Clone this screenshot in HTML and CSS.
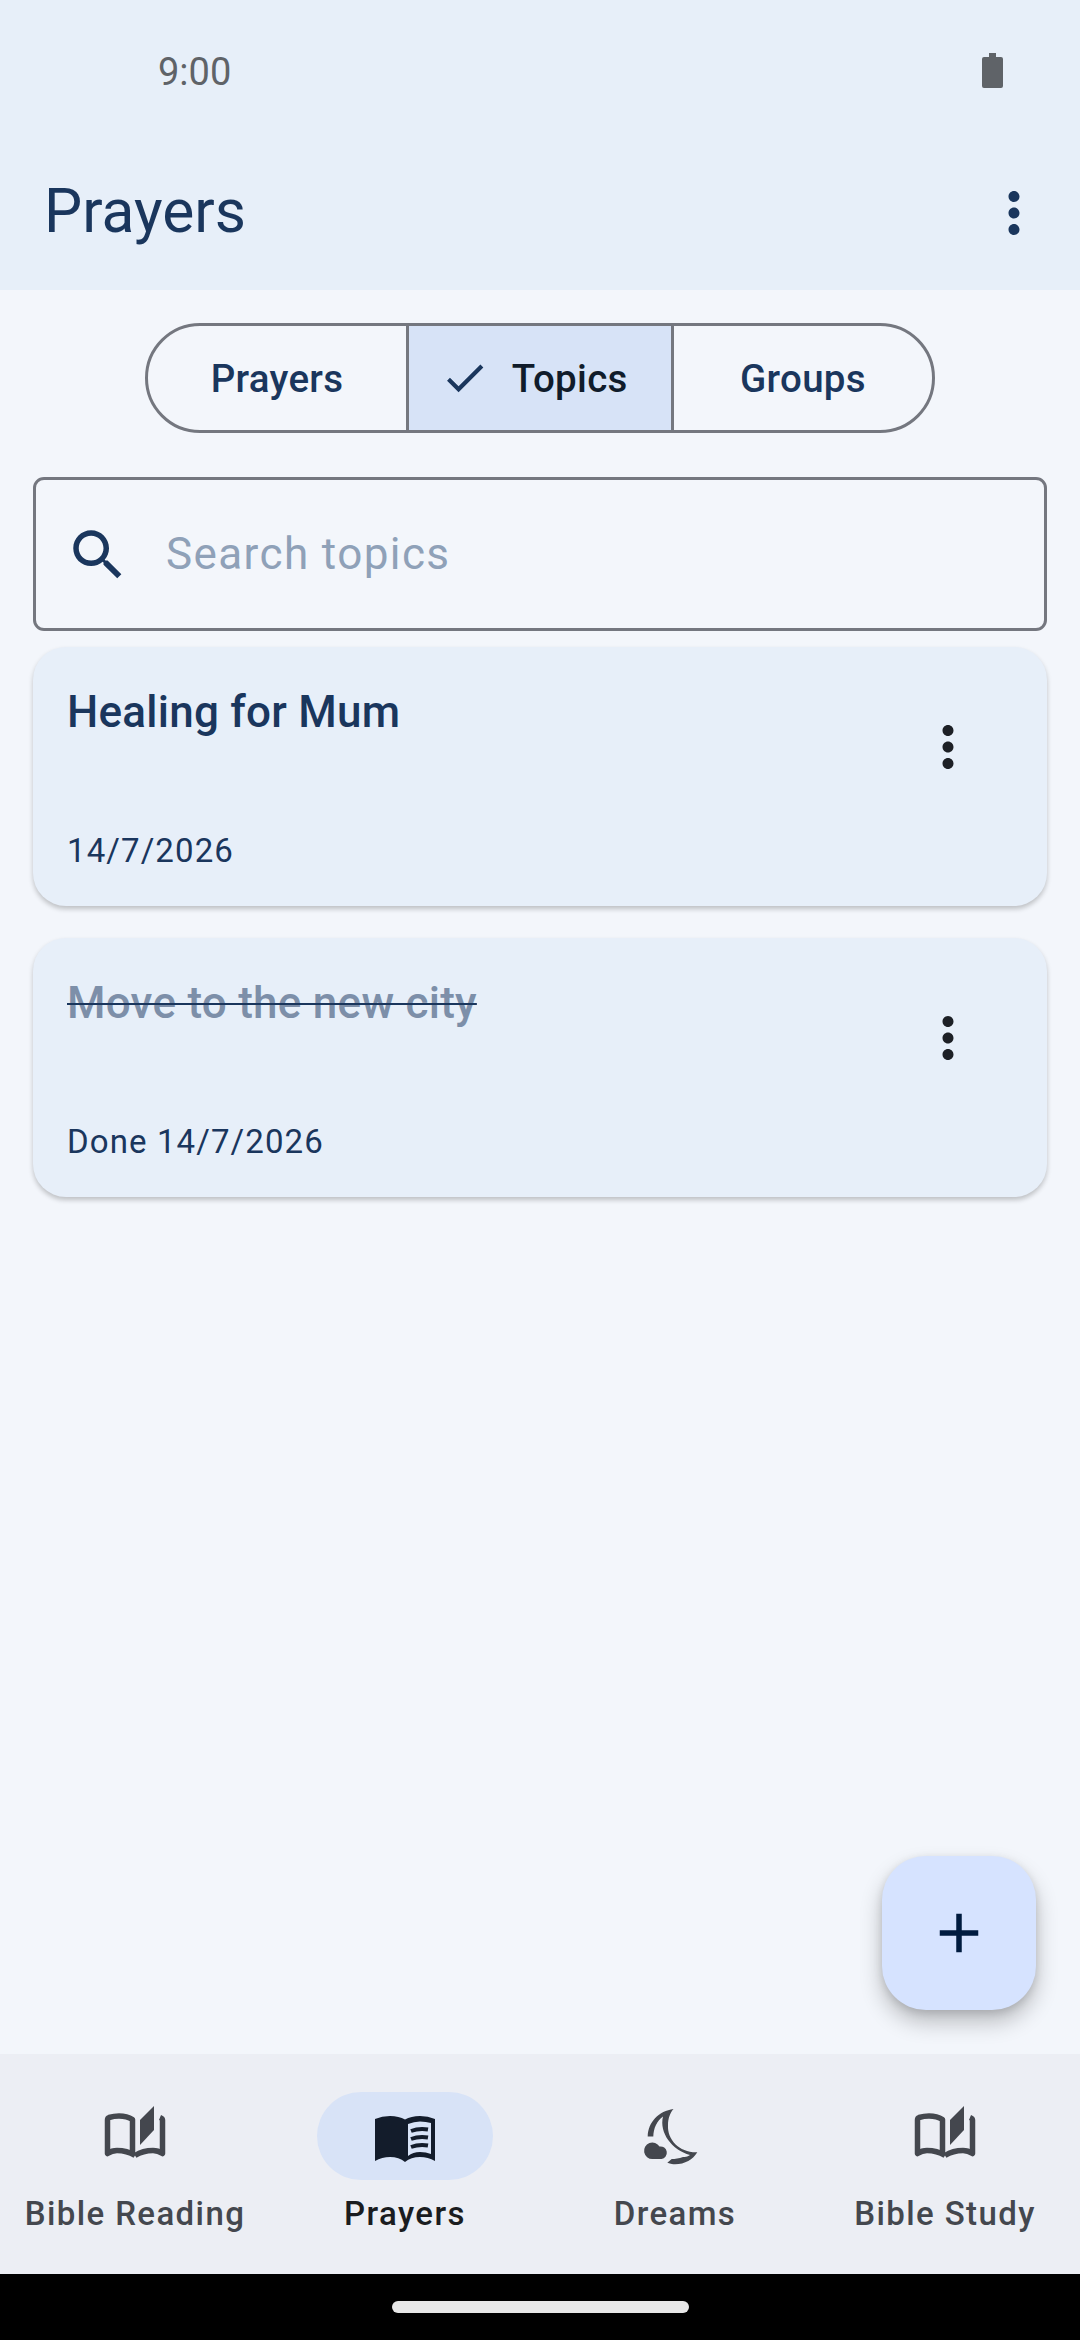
FILE: index.html
```html
<!DOCTYPE html>
<html lang="en">
<head>
    <meta charset="UTF-8">
    <meta name="viewport" content="width=device-width, initial-scale=1.0">
    <title>Prayers</title>
    <link rel="stylesheet" href="styles.css">
</head>
<body>
    <div class="phone">
        <header class="top">
            <div class="status">
                <span class="time">9:00</span>
                <svg class="battery" viewBox="0 0 21 35"><path d="M7 0h7v4h5q2 0 2 2v27q0 2-2 2H2q-2 0-2-2V6q0-2 2-2h5z"/></svg>
            </div>
            <div class="appbar">
                <h1>Prayers</h1>
                <svg class="icon dots-top" viewBox="0 0 24 24"><path d="M12 8c1.1 0 2-.9 2-2s-.9-2-2-2-2 .9-2 2 .9 2 2 2zm0 2c-1.1 0-2 .9-2 2s.9 2 2 2 2-.9 2-2-.9-2-2-2zm0 6c-1.1 0-2 .9-2 2s.9 2 2 2 2-.9 2-2-.9-2-2-2z"/></svg>
            </div>
        </header>

        <main class="content">
            <div class="segments">
                <div class="segment">Prayers</div>
                <div class="segment selected">
                    <svg class="check" viewBox="0 0 24 24"><path d="M9 16.17L4.83 12l-1.42 1.41L9 19 21 7l-1.41-1.41z"/></svg>
                    Topics
                </div>
                <div class="segment">Groups</div>
            </div>

            <div class="search">
                <svg class="icon search-icon" viewBox="0 0 24 24"><path d="M15.5 14h-.79l-.28-.27C15.41 12.59 16 11.11 16 9.5 16 5.91 13.09 3 9.5 3S3 5.91 3 9.5 5.91 16 9.5 16c1.61 0 3.09-.59 4.23-1.57l.27.28v.79l5 4.99L20.49 19l-4.99-5zm-6 0C7.01 14 5 11.99 5 9.5S7.01 5 9.5 5 14 7.01 14 9.5 11.99 14 9.5 14z"/></svg>
                <span class="placeholder">Search topics</span>
            </div>

            <div class="card">
                <div class="card-text">
                    <div class="card-title">Healing for Mum</div>
                    <div class="card-date">14/7/2026</div>
                </div>
                <svg class="icon dots-card" viewBox="0 0 24 24"><path d="M12 8c1.1 0 2-.9 2-2s-.9-2-2-2-2 .9-2 2 .9 2 2 2zm0 2c-1.1 0-2 .9-2 2s.9 2 2 2 2-.9 2-2-.9-2-2-2zm0 6c-1.1 0-2 .9-2 2s.9 2 2 2 2-.9 2-2-.9-2-2-2z"/></svg>
            </div>

            <div class="card">
                <div class="card-text">
                    <div class="card-title done">Move to the new city</div>
                    <div class="card-date">Done 14/7/2026</div>
                </div>
                <svg class="icon dots-card" viewBox="0 0 24 24"><path d="M12 8c1.1 0 2-.9 2-2s-.9-2-2-2-2 .9-2 2 .9 2 2 2zm0 2c-1.1 0-2 .9-2 2s.9 2 2 2 2-.9 2-2-.9-2-2-2zm0 6c-1.1 0-2 .9-2 2s.9 2 2 2 2-.9 2-2-.9-2-2-2z"/></svg>
            </div>

            <div class="fab">
                <svg class="icon" viewBox="0 0 24 24"><path d="M19 13h-6v6h-2v-6H5v-2h6V5h2v6h6v2z"/></svg>
            </div>
        </main>

        <nav class="bottom-nav">
            <div class="nav-item">
                <div class="nav-icon">
                    <svg class="nav-svg" viewBox="0 0 66 66">
                        <path class="book-line" d="M33 52.5Q25 47.5 15 47.5Q10 47.5 5.5 50.5V17Q5.5 15 7 14.5Q12 13 17 13Q25 13 30.5 16.5V50"/>
                        <path class="book-line" d="M33 52.5Q41 47.5 51 47.5Q56 47.5 60.5 50.5V17Q60.5 15.5 58 14.5"/>
                        <path d="M38 17L52 3V27L38 42z"/>
                    </svg>
                </div>
                <span class="nav-label">Bible Reading</span>
            </div>
            <div class="nav-item active">
                <div class="nav-icon">
                    <svg class="nav-svg" viewBox="0 0 66 66">
                        <path d="M3 16Q10 13 18 13Q27 13 33 16.5Q39 13 48 13Q56 13 63 16V58Q56 54 48 54Q39 54 33 59Q27 54 18 54Q10 54 3 58z"/>
                        <path class="page" d="M36 21Q42 18.5 48 18.5Q54 18.5 59 20V51Q54 49 48 49Q41 49 36 53z"/>
                        <path class="page-line" d="M39 28Q47 25 56 26.5M39 36Q47 33 56 34.5M39 44Q47 41 56 42.5"/>
                    </svg>
                </div>
                <span class="nav-label">Prayers</span>
            </div>
            <div class="nav-item">
                <div class="nav-icon">
                    <svg class="nav-svg" viewBox="0 0 66 66">
                        <path d="M31.5 6C17 8 6 19 5.7 33.5L11.3 33.5C11.5 25 15 18 21 13.5C17 30 30 47 48 52C45 54 43 54 41 54C37 55.5 33 56 29.7 56L25.3 59.7C29 61 31 61.3 33 61.3C43 61.3 51 56.5 55.3 49.3C38 50 25 37 26 22C26 16 28 10 31.5 6z"/>
                        <path d="M10.5 56a8.3 8.3 0 1 1 7-12.5a6.3 6.3 0 0 1 2 12.5z"/>
                    </svg>
                </div>
                <span class="nav-label">Dreams</span>
            </div>
            <div class="nav-item">
                <div class="nav-icon">
                    <svg class="nav-svg" viewBox="0 0 66 66">
                        <path class="book-line" d="M33 52.5Q25 47.5 15 47.5Q10 47.5 5.5 50.5V17Q5.5 15 7 14.5Q12 13 17 13Q25 13 30.5 16.5V50"/>
                        <path class="book-line" d="M33 52.5Q41 47.5 51 47.5Q56 47.5 60.5 50.5V17Q60.5 15.5 58 14.5"/>
                        <path d="M38 17L52 3V27L38 42z"/>
                    </svg>
                </div>
                <span class="nav-label">Bible Study</span>
            </div>
        </nav>

        <div class="gesture-bar"><div class="gesture-pill"></div></div>
    </div>
</body>
</html>
```

FILE: styles.css
```css
* {
    box-sizing: border-box;
}
body {
    margin: 0;
    font-family: Roboto, "Liberation Sans", sans-serif;
    background: #f3f6fb;
    color: #1a365d;
}
.phone {
    width: 1080px;
    height: 2340px;
    display: flex;
    flex-direction: column;
    overflow: hidden;
}
.icon {
    width: 66px;
    height: 66px;
    flex-shrink: 0;
    fill: currentColor;
}

/* top bars */
.top {
    background: #e7eff9;
    height: 290px;
}
.status {
    height: 136px;
    padding: 50px 77px 0 158px;
    display: flex;
    justify-content: space-between;
    align-items: flex-start;
}
.time {
    font-size: 38px;
    line-height: 44px;
    color: #5f6368;
}
.battery {
    width: 21px;
    height: 35px;
    margin-top: 3px;
    fill: #5f6368;
}
.appbar {
    height: 154px;
    padding: 0 33px 4px 44px;
    display: flex;
    justify-content: space-between;
    align-items: center;
}
.appbar h1 {
    margin: 0;
    font-size: 60.5px;
    font-weight: 400;
}
.dots-top {
    margin-top: 4px;
}

/* main area */
.content {
    flex: 1;
    position: relative;
    padding: 33px 33px 0;
}
.segments {
    width: 790px;
    height: 110px;
    margin: 0 auto 44px;
    display: flex;
    border: 3px solid #74777f;
    border-radius: 55px;
    overflow: hidden;
}
.segment {
    flex: 1 1 0;
    display: flex;
    align-items: center;
    justify-content: center;
    font-size: 38.5px;
    font-weight: 500;
    letter-spacing: 0.3px;
}
.segment.selected {
    flex: 0 0 268px;
    background: #d7e3f7;
    color: #101c2b;
    border-left: 3px solid #74777f;
    border-right: 3px solid #74777f;
    padding-right: 12px;
}
.check {
    width: 49.5px;
    height: 49.5px;
    margin-right: 22px;
    fill: #1a365d;
}
.search {
    height: 154px;
    margin-bottom: 16px;
    padding: 0 0 1px 29px;
    display: flex;
    align-items: center;
    gap: 35px;
    border: 3px solid #74777f;
    border-radius: 11px;
}
.search-icon {
    margin-top: 3px;
}
.placeholder {
    font-size: 44px;
    letter-spacing: 1.4px;
    color: #8fa1b8;
}
.card {
    height: 259px;
    margin-bottom: 32px;
    padding: 0 66px 0 34px;
    display: flex;
    align-items: flex-start;
    background: #e7eff9;
    border-radius: 33px;
    box-shadow: 0 3px 5px rgba(0, 0, 0, 0.22);
}
.card-text {
    flex: 1;
    height: 100%;
    display: flex;
    flex-direction: column;
    justify-content: space-between;
    padding: 39px 0 33px;
}
.card-title {
    font-size: 44px;
    font-weight: 500;
    line-height: 52px;
    letter-spacing: 0.25px;
}
.card-title.done {
    color: #7d8fa9;
    text-decoration: line-through;
    text-decoration-color: #1a365d;
    text-decoration-thickness: 2px;
}
.card-date {
    font-size: 33px;
    line-height: 44px;
    letter-spacing: 1.1px;
}
.dots-card {
    margin-top: 67px;
    color: #1d2026;
}
.fab {
    position: absolute;
    right: 44px;
    bottom: 44px;
    width: 154px;
    height: 154px;
    display: flex;
    align-items: center;
    justify-content: center;
    background: #d6e3ff;
    color: #001b3f;
    border-radius: 44px;
    box-shadow: 0 12px 22px rgba(0, 0, 0, 0.24), 0 3px 8px rgba(0, 0, 0, 0.12);
}

/* bottom nav */
.bottom-nav {
    height: 220px;
    padding-top: 38px;
    display: flex;
    background: #eceef4;
    color: #44474e;
}
.nav-item {
    flex: 1;
    display: flex;
    flex-direction: column;
    align-items: center;
}
.nav-icon {
    width: 176px;
    height: 88px;
    display: flex;
    align-items: center;
    justify-content: center;
    border-radius: 44px;
}
.nav-svg {
    width: 66px;
    height: 66px;
    fill: currentColor;
}
.book-line {
    fill: none;
    stroke: currentColor;
    stroke-width: 5.5;
    stroke-linejoin: round;
}
.nav-label {
    margin-top: 14px;
    font-size: 33px;
    line-height: 40px;
    font-weight: 500;
    letter-spacing: 1.4px;
}
.nav-item.active {
    color: #1a1c20;
}
.nav-item.active .nav-icon {
    background: #d8e3f7;
}
.nav-item.active .nav-svg {
    fill: #131c2b;
}
.page {
    fill: #d8e3f7;
}
.page-line {
    fill: none;
    stroke: #131c2b;
    stroke-width: 4;
}
.gesture-bar {
    height: 66px;
    background: #000;
    display: flex;
    justify-content: center;
    padding-top: 27px;
}
.gesture-pill {
    width: 297px;
    height: 12px;
    border-radius: 6px;
    background: #e8e8e8;
}
```
